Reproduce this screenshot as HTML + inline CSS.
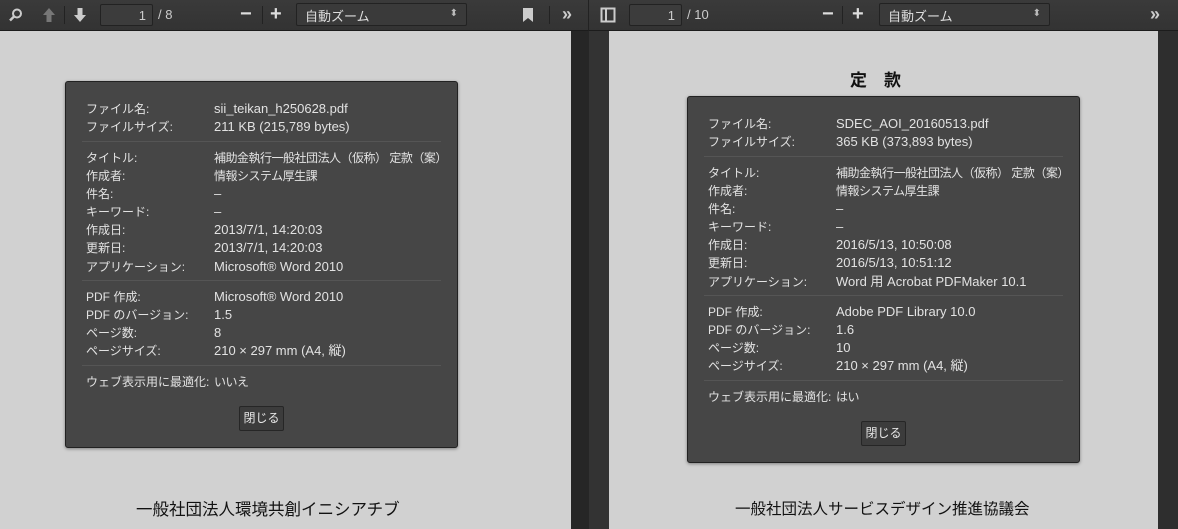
<!DOCTYPE html><html><head><meta charset="utf-8"><style>
*{margin:0;padding:0;box-sizing:border-box}
body{width:1178px;height:529px;overflow:hidden;background:#262626;font-family:"Liberation Sans","Noto Sans CJK JP",sans-serif;position:relative}
.abs{position:absolute}
.tb{position:absolute;top:0;height:31px;background:linear-gradient(#3a3a3a,#333);border-bottom:1px solid #1c1c1c}
.page{position:absolute;background:#d1d1d1}
.inp{position:absolute;top:4px;height:22px;border:1px solid #222;background:#3c3c3c;border-radius:2px;color:#ccc;font-size:13px;text-align:right;padding:3px 6px 0 0}
.cnt{position:absolute;top:7px;color:#ccc;font-size:13px}
.sel{position:absolute;top:3px;height:23px;border:1px solid #222;background:#3a3a3a;border-radius:2px;color:#ddd;font-size:13px;padding:2px 0 0 8px}
.sel:after{content:"⬍";position:absolute;right:8px;top:4px;font-size:10px;color:#bbb}
.pm{position:absolute;top:3px;color:#ddd;font-size:20px;font-weight:bold}
.sep{position:absolute;top:6px;width:1px;height:18px;background:#222}
.dlg{position:absolute;width:393px;height:367px;background:#464646;border:1px solid #222;border-radius:3px;box-shadow:0 1px 3px rgba(0,0,0,.4);color:#e2e2e2;font-size:12px}
.r{position:absolute;left:20px;white-space:nowrap;line-height:14px}
.v{position:absolute;left:148px;white-space:nowrap;font-size:13px;line-height:14px}
.v.j{font-size:12px;letter-spacing:-0.5px}
.hr{position:absolute;left:16px;right:16px;height:1px;background:#2a2a2a;border-bottom:1px solid #555}
.btn{position:absolute;left:173px;width:45px;height:25px;border:1px solid #262626;background:#3c3c3c;border-radius:2px;color:#e8e8e8;font-size:12px;text-align:center;line-height:23px}
.foot{position:absolute;font-size:16.5px;color:#111;white-space:nowrap}
</style></head><body>
<div class="page" style="left:0;top:31px;width:571px;height:498px"></div>
<div class="abs" style="left:589px;top:31px;width:20px;height:498px;background:#333"></div>
<div class="page" style="left:609px;top:31px;width:549px;height:498px"></div>
<div class="abs" style="left:1158px;top:31px;width:20px;height:498px;background:#2e2e2e"></div>

<div class="tb" style="left:0;width:588px"></div>
<div class="tb" style="left:588px;width:590px;border-left:1px solid #222"></div>
<svg class="abs" style="left:9px;top:8px" width="14" height="14"><circle cx="8" cy="5.5" r="4" fill="none" stroke="#ccc" stroke-width="2"/><path d="M5 8.5L1 12.5" stroke="#ccc" stroke-width="2.5"/></svg>
<svg class="abs" style="left:41px;top:7px" width="16" height="16"><path d="M8 1L14 8H10.5V15H5.5V8H2Z" fill="#777"/></svg>
<div class="sep" style="left:64px"></div>
<svg class="abs" style="left:72px;top:7px" width="16" height="16"><path d="M8 15L14 8H10.5V1H5.5V8H2Z" fill="#ccc"/></svg>
<div class="inp" style="left:100px;width:53px">1</div><div class="cnt" style="left:158px">/ 8</div>
<div class="pm" style="left:240px">−</div><div class="sep" style="left:262px"></div><div class="pm" style="left:270px">+</div>
<div class="sel" style="left:296px;width:171px">自動ズーム</div>
<svg class="abs" style="left:523px;top:8px" width="10" height="14"><path d="M0 0H10V14L5 10L0 14Z" fill="#ccc"/></svg>
<div class="sep" style="left:549px"></div>
<div class="abs" style="left:562px;top:4px;color:#ccc;font-size:18px;font-weight:bold">»</div>

<svg class="abs" style="left:600px;top:7px" width="16" height="16"><rect x="1.5" y="1.5" width="13" height="13" fill="none" stroke="#ccc" stroke-width="2"/><path d="M6 2V14" stroke="#ccc" stroke-width="2"/></svg>
<div class="inp" style="left:629px;width:53px">1</div><div class="cnt" style="left:687px">/ 10</div>
<div class="pm" style="left:822px">−</div><div class="sep" style="left:842px"></div><div class="pm" style="left:852px">+</div>
<div class="sel" style="left:879px;width:171px">自動ズーム</div>
<div class="abs" style="left:1150px;top:4px;color:#ccc;font-size:18px;font-weight:bold">»</div>

<div class="abs" style="left:850px;top:66px;font-size:17px;font-weight:bold;color:#111">定　款</div>

<div class="dlg" style="left:65px;top:81px">
<div class="r" style="top:20px">ファイル名:</div><div class="v" style="top:20px">sii_teikan_h250628.pdf</div>
<div class="r" style="top:38px">ファイルサイズ:</div><div class="v" style="top:38px">211 KB (215,789 bytes)</div>
<div class="hr" style="top:59px"></div>
<div class="r" style="top:69px">タイトル:</div><div class="v j" style="top:69px">補助金執行一般社団法人（仮称） 定款（案）</div>
<div class="r" style="top:87px">作成者:</div><div class="v j" style="top:87px">情報システム厚生課</div>
<div class="r" style="top:105px">件名:</div><div class="v" style="top:105px">–</div>
<div class="r" style="top:123px">キーワード:</div><div class="v" style="top:123px">–</div>
<div class="r" style="top:141px">作成日:</div><div class="v" style="top:141px">2013/7/1, 14:20:03</div>
<div class="r" style="top:159px">更新日:</div><div class="v" style="top:159px">2013/7/1, 14:20:03</div>
<div class="r" style="top:178px">アプリケーション:</div><div class="v" style="top:178px">Microsoft® Word 2010</div>
<div class="hr" style="top:198px"></div>
<div class="r" style="top:208px">PDF 作成:</div><div class="v" style="top:208px">Microsoft® Word 2010</div>
<div class="r" style="top:226px">PDF のバージョン:</div><div class="v" style="top:226px">1.5</div>
<div class="r" style="top:244px">ページ数:</div><div class="v" style="top:244px">8</div>
<div class="r" style="top:262px">ページサイズ:</div><div class="v" style="top:262px">210 × 297 mm (A4, 縦)</div>
<div class="hr" style="top:283px"></div>
<div class="r" style="top:293px">ウェブ表示用に最適化:</div><div class="v j" style="top:293px">いいえ</div>
<div class="btn" style="top:324px">閉じる</div>
</div>

<div class="dlg" style="left:687px;top:96px">
<div class="r" style="top:20px">ファイル名:</div><div class="v" style="top:20px">SDEC_AOI_20160513.pdf</div>
<div class="r" style="top:38px">ファイルサイズ:</div><div class="v" style="top:38px">365 KB (373,893 bytes)</div>
<div class="hr" style="top:59px"></div>
<div class="r" style="top:69px">タイトル:</div><div class="v j" style="top:69px">補助金執行一般社団法人（仮称） 定款（案）</div>
<div class="r" style="top:87px">作成者:</div><div class="v j" style="top:87px">情報システム厚生課</div>
<div class="r" style="top:105px">件名:</div><div class="v" style="top:105px">–</div>
<div class="r" style="top:123px">キーワード:</div><div class="v" style="top:123px">–</div>
<div class="r" style="top:141px">作成日:</div><div class="v" style="top:141px">2016/5/13, 10:50:08</div>
<div class="r" style="top:159px">更新日:</div><div class="v" style="top:159px">2016/5/13, 10:51:12</div>
<div class="r" style="top:178px">アプリケーション:</div><div class="v" style="top:178px">Word 用 Acrobat PDFMaker 10.1</div>
<div class="hr" style="top:198px"></div>
<div class="r" style="top:208px">PDF 作成:</div><div class="v" style="top:208px">Adobe PDF Library 10.0</div>
<div class="r" style="top:226px">PDF のバージョン:</div><div class="v" style="top:226px">1.6</div>
<div class="r" style="top:244px">ページ数:</div><div class="v" style="top:244px">10</div>
<div class="r" style="top:262px">ページサイズ:</div><div class="v" style="top:262px">210 × 297 mm (A4, 縦)</div>
<div class="hr" style="top:283px"></div>
<div class="r" style="top:293px">ウェブ表示用に最適化:</div><div class="v j" style="top:293px">はい</div>
<div class="btn" style="top:324px">閉じる</div>
</div>

<div class="foot" style="left:136px;top:496px">一般社団法人環境共創イニシアチブ</div>
<div class="foot" style="left:735px;top:497px;font-size:15.5px">一般社団法人サービスデザイン推進協議会</div>
</body></html>
